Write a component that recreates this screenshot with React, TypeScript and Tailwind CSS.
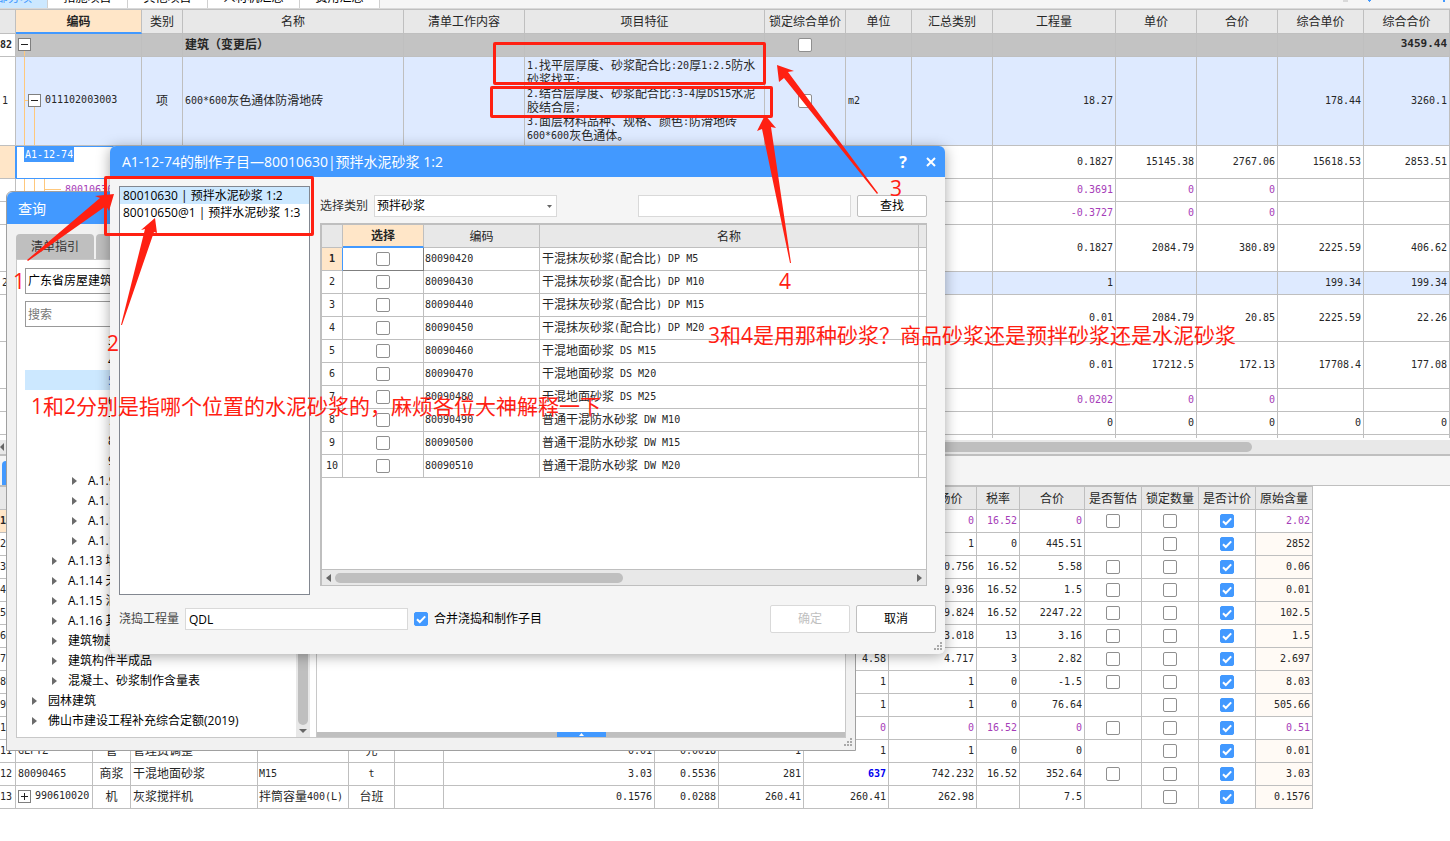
import type { ReactNode } from 'react';
import { clsx } from 'clsx';

const uiFont = "[font-family:'Open_Sans','Noto_Sans_CJK_SC',sans-serif]";

const billColumns = [
  { label: '', width: 'w-4' },
  { label: '编码', width: 'w-[126px]' },
  { label: '类别', width: 'w-[41px]' },
  { label: '名称', width: 'w-[221px]' },
  { label: '清单工作内容', width: 'w-[121px]' },
  { label: '项目特征', width: '' },
  { label: '锁定综合单价', width: 'w-[81px]' },
  { label: '单位', width: 'w-[66px]' },
  { label: '汇总类别', width: 'w-[81px]' },
  { label: '工程量', width: 'w-[123px]' },
  { label: '单价', width: 'w-[81px]' },
  { label: '合价', width: 'w-[81px]' },
  { label: '综合单价', width: 'w-[86px]' },
  { label: '综合合价', width: 'w-[86px]' },
];

const features = [
  '1.找平层厚度、砂浆配合比:20厚1:2.5防水',
  '砂浆找平;',
  '2.结合层厚度、砂浆配合比:3-4厚DS15水泥',
  '胶结合层;',
  '3.面层材料品种、规格、颜色:防滑地砖',
  '600*600灰色通体。',
];

// rows below the one being edited
const billRows: { height: string; no?: string; values: string[]; tone?: 'purple' | 'blue' }[] = [
  { height: 'h-[23px]', values: ['-0.3727', '0', '0', '', ''], tone: 'purple' },
  { height: 'h-[47px]', values: ['0.1827', '2084.79', '380.89', '2225.59', '406.62'] },
  { height: 'h-[23px]', no: '2', values: ['1', '', '', '199.34', '199.34'], tone: 'blue' },
  { height: 'h-[47px]', values: ['0.01', '2084.79', '20.85', '2225.59', '22.26'] },
  { height: 'h-[47px]', values: ['0.01', '17212.5', '172.13', '17708.4', '177.08'] },
  { height: 'h-[23px]', values: ['0.0202', '0', '0', '', ''], tone: 'purple' },
  { height: 'h-[23px]', values: ['0', '0', '0', '0', '0'] },
];

const resourceColumns = [
  { label: '', width: 'w-4' },
  { label: '', width: 'w-[77px]' },
  { label: '', width: 'w-[38px]' },
  { label: '', width: 'w-[127px]' },
  { label: '', width: 'w-[91px]' },
  { label: '', width: 'w-[46px]' },
  { label: '', width: 'w-[49px]' },
  { label: '', width: 'w-[211px]' },
  { label: '', width: 'w-[64px]' },
  { label: '', width: 'w-[85px]' },
  { label: '', width: 'w-[85px]' },
  { label: '含税市场价', width: 'w-[88px]' },
  { label: '税率', width: 'w-[43px]' },
  { label: '合价', width: 'w-[65px]' },
  { label: '是否暂估', width: 'w-[57px]' },
  { label: '锁定数量', width: 'w-[57px]' },
  { label: '是否计价', width: 'w-[57px]' },
  { label: '原始含量', width: 'w-[57px]' },
];

type Resource = {
  code?: string;
  kind?: string;
  name?: string;
  spec?: string;
  unit?: string;
  amounts?: string[];
  price?: string;
  taxPrice: string;
  rate: string;
  total: string;
  estimate: boolean;
  origin: string;
  purple?: boolean;
};

const resources: Resource[] = [
  { taxPrice: '0', rate: '16.52', total: '0', estimate: true, origin: '2.02', purple: true },
  { taxPrice: '1', rate: '0', total: '445.51', estimate: false, origin: '2852' },
  { taxPrice: '0.756', rate: '16.52', total: '5.58', estimate: true, origin: '0.06' },
  { taxPrice: '9.936', rate: '16.52', total: '1.5', estimate: true, origin: '0.01' },
  { taxPrice: '9.824', rate: '16.52', total: '2247.22', estimate: true, origin: '102.5' },
  { taxPrice: '3.018', rate: '13', total: '3.16', estimate: true, origin: '1.5' },
  { price: '4.58', taxPrice: '4.717', rate: '3', total: '2.82', estimate: true, origin: '2.697' },
  { price: '1', taxPrice: '1', rate: '0', total: '-1.5', estimate: true, origin: '8.03' },
  { price: '1', taxPrice: '1', rate: '0', total: '76.64', estimate: false, origin: '505.66' },
  { price: '0', taxPrice: '0', rate: '16.52', total: '0', estimate: true, origin: '0.51', purple: true },
  {
    code: 'GLFTZ', kind: '管', name: '管理费调整', unit: '元', amounts: ['0.01', '0.0018', '1'],
    price: '1', taxPrice: '1', rate: '0', total: '0', estimate: false, origin: '0.01',
  },
  {
    code: '80090465', kind: '商浆', name: '干混地面砂浆', spec: 'M15', unit: 't', amounts: ['3.03', '0.5536', '281'],
    price: '637', taxPrice: '742.232', rate: '16.52', total: '352.64', estimate: true, origin: '3.03',
  },
  {
    code: '990610020', kind: '机', name: '灰浆搅拌机', spec: '拌筒容量400(L)', unit: '台班', amounts: ['0.1576', '0.0288', '260.41'],
    price: '260.41', taxPrice: '262.98', rate: '', total: '7.5', estimate: false, origin: '0.1576',
  },
];

const mortars = [
  ['80090420', '干混抹灰砂浆(配合比) DP M5'],
  ['80090430', '干混抹灰砂浆(配合比) DP M10'],
  ['80090440', '干混抹灰砂浆(配合比) DP M15'],
  ['80090450', '干混抹灰砂浆(配合比) DP M20'],
  ['80090460', '干混地面砂浆 DS M15'],
  ['80090470', '干混地面砂浆 DS M20'],
  ['80090480', '干混地面砂浆 DS M25'],
  ['80090490', '普通干混防水砂浆 DW M10'],
  ['80090500', '普通干混防水砂浆 DW M15'],
  ['80090510', '普通干混防水砂浆 DW M20'],
];

const indents = ['pl-[7px]', 'pl-[27px]', 'pl-[47px]', 'pl-[83px]'];

const tree: { level: number; label: string }[] = [
  { level: 3, label: '3' },
  { level: 3, label: '4' },
  { level: 3, label: '5' },
  { level: 3, label: '6' },
  { level: 3, label: '7' },
  { level: 3, label: '8' },
  { level: 3, label: '9' },
  { level: 2, label: 'A.1.9' },
  { level: 2, label: 'A.1.10' },
  { level: 2, label: 'A.1.11' },
  { level: 2, label: 'A.1.12' },
  { level: 1, label: 'A.1.13 墙面' },
  { level: 1, label: 'A.1.14 天棚' },
  { level: 1, label: 'A.1.15 油漆' },
  { level: 1, label: 'A.1.16 其他' },
  { level: 1, label: '建筑物超高' },
  { level: 1, label: '建筑构件半成品' },
  { level: 1, label: '混凝土、砂浆制作含量表' },
  { level: 0, label: '园林建筑' },
  { level: 0, label: '佛山市建设工程补充综合定额(2019)' },
];

// Half-width characters are set in a mono face, two of them to one full-width one
function Mixed({ text }: { text: string }) {
  return (
    <>
      {text.split(/([ -~]+)/).filter(Boolean).map((part, i) =>
        /^[ -~]/.test(part) ? (
          <span key={i} className="align-[1px] text-[10px] leading-none whitespace-pre [font-family:'DejaVu_Sans_Mono',monospace]">{part}</span>
        ) : (
          part
        ),
      )}
    </>
  );
}

function Check({ label, checked = false }: { label: string; checked?: boolean }) {
  return (
    <span className="inline-grid size-[14px] align-middle">
      <input
        type="checkbox"
        aria-label={label}
        defaultChecked={checked}
        className="peer col-start-1 row-start-1 size-[14px] appearance-none rounded-xs border border-[#8f8f8f] bg-white checked:border-[#4299ff] checked:bg-[#4299ff]"
      />
      <svg viewBox="0 0 14 14" className="pointer-events-none col-start-1 row-start-1 hidden size-[14px] peer-checked:block">
        <path d="M3 7.2 L5.8 10 L11.2 4.4" fill="none" stroke="#fff" strokeWidth="2" />
      </svg>
    </span>
  );
}

function Expander({ open }: { open: boolean }) {
  return (
    <button aria-label={open ? '折叠' : '展开'} className="relative block size-[13px] shrink-0 border border-[#7f7f7f] bg-white">
      <svg viewBox="0 0 11 11" className="size-[11px]">
        <path d={open ? 'M2 5.5H9' : 'M2 5.5H9M5.5 2V9'} stroke="#222" strokeWidth="1" />
      </svg>
    </button>
  );
}

function Grip({ className }: { className: string }) {
  return (
    <svg viewBox="0 0 8 8" className={clsx('absolute size-2', className)} fill="#a9a9a9">
      <path d="M6 0h2v2h-2zM3 3h2v2h-2zM6 3h2v2h-2zM0 6h2v2h-2zM3 6h2v2h-2zM6 6h2v2h-2z" />
    </svg>
  );
}

function Cell({ children, className }: { children?: ReactNode; className?: string }) {
  return <td className={clsx('overflow-hidden border-r border-b border-[#bfbfbf] pb-0.5 whitespace-nowrap', className)}>{children}</td>;
}

function Head({ label, active }: { label: string; active?: boolean }) {
  return (
    <th
      className={clsx(
        'overflow-hidden border-r border-b pb-px whitespace-nowrap',
        active ? 'border-r-[#bfbfbf] border-b-2 border-b-[#4299ff] bg-[#ffe6c8] font-bold' : 'border-[#bfbfbf] bg-[#e8e8e8] font-normal',
      )}
    >
      {label}
    </th>
  );
}

function BillTable() {
  return (
    <table className="w-full table-fixed border-separate border-spacing-0 border-t border-[#bfbfbf] text-xs leading-[14px] text-[#262626]">
      <colgroup>
        {billColumns.map((c, i) => <col key={i} className={c.width} />)}
      </colgroup>
      <thead>
        <tr className="h-6">
          {billColumns.map((c, i) => <Head key={i} label={c.label} active={c.label === '编码'} />)}
        </tr>
      </thead>
      <tbody>
        <tr className="bg-[#c3c3c3] font-bold">
          <Cell className="h-[23px] bg-white"><Mixed text="82" /></Cell>
          <Cell className="relative pl-0.5">
            <svg className="absolute top-0 left-0 h-[23px] w-5" stroke="#ffc87c"><path d="M8.5 17V23" /></svg>
            <Expander open />
          </Cell>
          <Cell />
          <Cell className="pl-0.5">建筑（变更后）</Cell>
          <Cell />
          <Cell />
          <Cell className="text-center"><Check label="锁定综合单价" /></Cell>
          <Cell />
          <Cell />
          <Cell />
          <Cell />
          <Cell />
          <Cell />
          <Cell className="pr-0.5 text-right text-[11px] [font-family:'DejaVu_Sans_Mono',monospace]">3459.44</Cell>
        </tr>
        <tr className="bg-[#deeaff]">
          <Cell className="h-[89px] bg-white pl-0.5"><Mixed text="1" /></Cell>
          <Cell className="relative pl-3">
            <svg className="absolute top-0 left-0 h-[89px] w-6" stroke="#ffc87c" fill="none"><path d="M8.5 0V89M8.5 43.5H12M18.5 50V89" /></svg>
            <div className="flex items-center gap-1">
              <Expander open />
              <Mixed text="011102003003" />
            </div>
          </Cell>
          <Cell className="text-center">项</Cell>
          <Cell className="pl-0.5"><Mixed text="600*600灰色通体防滑地砖" /></Cell>
          <Cell />
          <Cell className="pl-0.5">
            {features.map((line) => <div key={line}><Mixed text={line} /></div>)}
          </Cell>
          <Cell className="text-center"><Check label="锁定综合单价" /></Cell>
          <Cell className="pl-0.5"><Mixed text="m2" /></Cell>
          <Cell />
          {['18.27', '', '', '178.44', '3260.1'].map((v, i) => (
            <Cell key={i} className="pr-0.5 text-right"><Mixed text={v} /></Cell>
          ))}
        </tr>
        <tr>
          <Cell className="h-[33px] border-r-[#4299ff] bg-[#ffe6c8]" />
          <Cell className="border-t border-l border-t-[#4299ff] border-b-[#4299ff] border-l-[#4299ff] pl-[7px] align-top">
            <input
              aria-label="编码"
              defaultValue="A1-12-74"
              className="block h-[15px] w-[50px] bg-[#4299ff] px-px text-[10px] text-white outline-none [font-family:'DejaVu_Sans_Mono',monospace]"
            />
          </Cell>
          {Array.from({ length: 7 }, (_, i) => <Cell key={i} />)}
          {['0.1827', '15145.38', '2767.06', '15618.53', '2853.51'].map((v, i) => (
            <Cell key={i} className="pr-0.5 text-right"><Mixed text={v} /></Cell>
          ))}
        </tr>
        <tr className="text-[#a63db8]">
          <Cell className="h-[23px]" />
          <Cell className="relative pl-[49px]">
            <svg className="absolute top-0 left-0 h-[23px] w-12" stroke="#ffc87c" fill="none"><path d="M8.5 0V23M18.5 0V23M28.5 0V23M28.5 10.5H45" /></svg>
            <Mixed text="80010630" />
          </Cell>
          {Array.from({ length: 7 }, (_, i) => <Cell key={i} />)}
          {['0.3691', '0', '0', '', ''].map((v, i) => (
            <Cell key={i} className="pr-0.5 text-right"><Mixed text={v} /></Cell>
          ))}
        </tr>
        {billRows.map((row, r) => (
          <tr key={r} className={clsx(row.tone === 'purple' && 'text-[#a63db8]', row.tone === 'blue' && 'bg-[#deeaff]')}>
            <Cell className={clsx(row.height, 'bg-white pl-0.5')}><Mixed text={row.no ?? ''} /></Cell>
            {Array.from({ length: 8 }, (_, i) => <Cell key={i} />)}
            {row.values.map((v, i) => (
              <Cell key={i} className="pr-0.5 text-right"><Mixed text={v} /></Cell>
            ))}
          </tr>
        ))}
        {/* the next row only just shows above the scroll bar */}
        <tr className="h-[3px]">
          {billColumns.map((_, i) => <td key={i} className="border-r border-[#bfbfbf]" />)}
        </tr>
      </tbody>
    </table>
  );
}

function ResourceTable() {
  return (
    <table className="w-[1313px] table-fixed border-separate border-spacing-0 border-t border-[#bfbfbf] text-xs leading-[14px] text-[#262626]">
      <colgroup>
        {resourceColumns.map((c, i) => <col key={i} className={c.width} />)}
      </colgroup>
      <thead>
        <tr className="h-[23px]">
          {resourceColumns.map((c, i) => <Head key={i} label={c.label} />)}
        </tr>
      </thead>
      <tbody>
        {resources.map((r, n) => (
          <tr key={n} className={clsx(r.purple && 'text-[#a63db8]')}>
            <Cell className={clsx('h-[23px] text-[#262626]', n === 0 && 'bg-[#ffe6c8] font-bold')}><Mixed text={String(n + 1)} /></Cell>
            <Cell className="pl-0.5">
              {r.code === '990610020' ? (
                <div className="flex items-center gap-1"><Expander open={false} /><Mixed text={r.code} /></div>
              ) : (
                <Mixed text={r.code ?? ''} />
              )}
            </Cell>
            <Cell className="text-center">{r.kind}</Cell>
            <Cell className="pl-0.5">{r.name}</Cell>
            <Cell className="pl-px"><Mixed text={r.spec ?? ''} /></Cell>
            <Cell className="text-center"><Mixed text={r.unit ?? ''} /></Cell>
            <Cell />
            {[0, 1, 2].map((i) => (
              <Cell key={i} className="pr-0.5 text-right"><Mixed text={r.amounts?.[i] ?? ''} /></Cell>
            ))}
            <Cell className={clsx('pr-0.5 text-right', r.price === '637' && 'font-bold text-[#0000f0]')}><Mixed text={r.price ?? ''} /></Cell>
            <Cell className="pr-0.5 text-right"><Mixed text={r.taxPrice} /></Cell>
            <Cell className="pr-0.5 text-right"><Mixed text={r.rate} /></Cell>
            <Cell className="pr-0.5 text-right"><Mixed text={r.total} /></Cell>
            <Cell className="text-center">{r.estimate && <Check label="是否暂估" />}</Cell>
            <Cell className="text-center"><Check label="锁定数量" /></Cell>
            <Cell className="text-center"><Check label="是否计价" checked /></Cell>
            <Cell className={clsx('pr-0.5 text-right', !r.purple && 'bg-[#fffaf5]')}><Mixed text={r.origin} /></Cell>
          </tr>
        ))}
      </tbody>
    </table>
  );
}

function QueryWindow() {
  return (
    <section className={clsx('absolute top-[191px] left-1.5 flex h-[560px] w-[850px] flex-col rounded-t-md border border-[#a0a0a0] bg-[#f1f1f1] text-xs text-black', uiFont)}>
      <header className="h-8 shrink-0 rounded-t-md bg-[#4299ff] pl-[11px] text-sm leading-[34px] text-white">查询</header>
      <div className="flex min-h-0 grow flex-col px-[9px] pt-2.5 pb-3">
        <div className="flex gap-0.5">
          <button className="h-[25px] w-[78px] rounded-t-sm bg-[#bfbfbf] text-[#333]">清单指引</button>
          <button aria-label="清单" className="h-[25px] w-[78px] rounded-t-sm bg-[#bfbfbf]" />
        </div>
        <div className="flex min-h-0 grow border border-[#c8c8c8] bg-white">
          <div className="flex w-[293px] shrink-0">
            <div className="min-w-0 grow pt-2 pl-2">
              <select aria-label="定额库" className="block h-[26px] w-full appearance-none border border-[#999] bg-white px-0.5">
                <option>广东省房屋建筑</option>
              </select>
              <input aria-label="搜索" placeholder="搜索" className="mt-[7px] block h-[26px] w-full border border-[#999] px-0.5 outline-none placeholder:text-[#777]" />
              <ul className="mt-[3px]">
                {tree.map((node) => (
                  <li
                    key={node.label}
                    className={clsx('flex h-5 items-center gap-[11px] pt-0.5 whitespace-nowrap', indents[node.level], node.label === '5' && 'bg-[#cce8ff] text-[#1a73d9]')}
                  >
                    {node.level < 3 && (
                      <svg viewBox="0 0 5 8" className="h-2 w-[5px] shrink-0" fill="#6b6b6b"><path d="M0 0L5 4L0 8Z" /></svg>
                    )}
                    {node.label}
                  </li>
                ))}
              </ul>
            </div>
            <div className="flex w-[14px] flex-col items-center bg-[#e8e8e8]">
              <div className="w-2.5 grow rounded-full bg-[#bfbfbf]" />
              <svg viewBox="0 0 8 4" className="my-1 h-1 w-2" fill="#666"><path d="M0 0H8L4 4Z" /></svg>
            </div>
          </div>
          <div className="ml-1.5 flex grow flex-col justify-end border-l border-[#c8c8c8]">
            <div className="flex h-[5px] justify-center bg-[#bfbfbf]">
              <button aria-label="展开" className="flex w-[49px] justify-center bg-[#4299ff] pt-px">
                <svg viewBox="0 0 5 3" className="h-[3px] w-[5px]" fill="#fff"><path d="M0 3L2.5 0L5 3Z" /></svg>
              </button>
            </div>
          </div>
        </div>
      </div>
      <Grip className="right-[3px] bottom-1" />
    </section>
  );
}

function MortarTable() {
  return (
    <table className="w-full table-fixed border-separate border-spacing-0 text-xs leading-[14px] text-[#262626] [font-family:'Noto_Sans_CJK_SC',sans-serif]">
      <colgroup>
        <col className="w-[21px]" />
        <col className="w-[81px]" />
        <col className="w-[116px]" />
        <col />
        <col className="w-[7px]" />
      </colgroup>
      <thead>
        <tr className="h-[23px]">
          <Head label="" />
          <Head label="选择" active />
          <Head label="编码" />
          <Head label="名称" />
          <th className="border-b border-[#bfbfbf] bg-[#e8e8e8]" />
        </tr>
      </thead>
      <tbody>
        {mortars.map(([code, name], i) => (
          <tr key={code}>
            <Cell className={clsx('h-[23px] text-center', i === 0 && 'border-r-[#4299ff] bg-[#ffe6c8] font-bold')}><Mixed text={String(i + 1)} /></Cell>
            <Cell className={clsx('text-center', i === 0 && 'border-r-[#7f7f7f] border-b-[#7f7f7f]')}><Check label={code} /></Cell>
            <Cell className="pl-px"><Mixed text={code} /></Cell>
            <Cell className="pl-0.5"><Mixed text={name} /></Cell>
            <td className="border-b border-[#bfbfbf]" />
          </tr>
        ))}
      </tbody>
    </table>
  );
}

function MakeItemDialog() {
  return (
    <section className={clsx('absolute top-[146px] left-[110px] flex h-[508px] w-[835px] flex-col rounded-md bg-[#f5f5f5] text-xs text-black shadow-[0_2px_14px_rgba(0,0,0,0.35)]', uiFont)}>
      <header className="flex h-[31px] shrink-0 items-center rounded-t-md bg-[#4299ff] pr-2 pl-3 text-white">
        <h2 className="grow text-sm leading-8">A1-12-74的制作子目—80010630|预拌水泥砂浆 1:2</h2>
        <button aria-label="帮助" className="mr-4 w-3 text-base leading-5 font-bold">?</button>
        <button aria-label="关闭" className="grid size-3 place-items-center">
          <svg viewBox="0 0 10 10" className="size-2.5" stroke="#fff" strokeWidth="2"><path d="M1 1L9 9M9 1L1 9" /></svg>
        </button>
      </header>
      <div className="flex gap-2.5 pt-[9px] pr-[18px] pl-[9px]">
        <ul className="h-[409px] w-[191px] shrink-0 border border-[#828790] bg-white whitespace-nowrap">
          <li className="h-[17px] bg-[#cce8ff] pl-[3px] leading-[17px]">80010630 | 预拌水泥砂浆 1:2</li>
          <li className="h-[17px] pl-[3px] leading-[17px]">80010650@1 | 预拌水泥砂浆 1:3</li>
        </ul>
        <div className="flex min-w-0 grow flex-col pt-[9px]">
          <div className="flex h-[22px] items-center">
            <label htmlFor="kind" className="w-[54px] text-[#333]">选择类别</label>
            <div className="relative w-[183px]">
              <select id="kind" className="h-[22px] w-full appearance-none border border-[#d9d9d9] bg-white px-0.5">
                <option>预拌砂浆</option>
              </select>
              <svg viewBox="0 0 5 3" className="pointer-events-none absolute top-2.5 right-[5px] h-[3px] w-[5px]" fill="#666"><path d="M0 0H5L2.5 3Z" /></svg>
            </div>
            <input aria-label="查找内容" className="mr-1.5 ml-auto h-[22px] w-[213px] border border-[#d9d9d9] bg-white outline-none" />
            <button className="h-[22px] w-[70px] rounded-xs border border-[#bfbfbf] bg-white">查找</button>
          </div>
          <div className="mt-1.5 flex h-[363px] flex-col border border-t-2 border-l-2 border-[#bfbfbf] bg-white">
            <MortarTable />
            <div className="mt-auto flex h-4 items-center border-t border-[#bfbfbf] bg-[#e8e8e8] px-1">
              <svg viewBox="0 0 5 8" className="h-2 w-[5px]" fill="#666"><path d="M5 0L0 4L5 8Z" /></svg>
              <div className="ml-1 h-2.5 w-[288px] rounded-full bg-[#bfbfbf]" />
              <svg viewBox="0 0 5 8" className="ml-auto h-2 w-[5px]" fill="#666"><path d="M0 0L5 4L0 8Z" /></svg>
            </div>
          </div>
        </div>
      </div>
      <footer className="flex items-center pt-2.5 pr-[9px] pl-[9px]">
        <label htmlFor="amount" className="w-[66px] text-[#444]">浇捣工程量</label>
        <input id="amount" defaultValue="QDL" className="h-[22px] w-[223px] border border-[#d9d9d9] bg-white px-[3px] outline-none" />
        <label className="ml-1.5 flex items-center gap-1.5">
          <Check label="合并浇捣和制作子目" checked />
          合并浇捣和制作子目
        </label>
        <button disabled className="ml-auto h-7 w-20 rounded-xs border border-[#d9d9d9] bg-white text-[#bfbfbf]">确定</button>
        <button className="ml-1.5 h-7 w-20 rounded-xs border border-[#bfbfbf] bg-white">取消</button>
      </footer>
      <Grip className="right-[3px] bottom-1" />
    </section>
  );
}

function Annotations() {
  return (
    <div className={clsx('pointer-events-none absolute inset-0 overflow-hidden text-[21px] leading-7 whitespace-nowrap text-[#ff2012]', uiFont)}>
      <div className="absolute top-[42px] left-[493px] h-[43px] w-[273px] rounded-xs border-3 border-[#ff2012]" />
      <div className="absolute top-[86px] left-[490px] h-8 w-[283px] rounded-xs border-3 border-[#ff2012]" />
      <div className="absolute top-[176px] left-[104px] h-[60px] w-[210px] rounded-xs border-3 border-[#ff2012]" />
      <svg className="absolute top-0 left-0 h-[400px] w-[900px]" fill="#ff2012">
        <path d="M27 260L100 198L95 196L114 194L109 211L106 206L28 261Z" />
        <path d="M121 325L145 229L141 230L155 218L157 233L154 232L122 325Z" />
        <path d="M878 193L788 72L794 71L777 65L779 82L784 78L877 194Z" />
        <path d="M791 263L771 127L776 128L765 115L757 131L762 129L790 263Z" />
      </svg>
      <span className="absolute top-[267px] left-[13px]">1</span>
      <span className="absolute top-[329px] left-[107px]">2</span>
      <span className="absolute top-[174px] left-[890px]">3</span>
      <span className="absolute top-[267px] left-[779px]">4</span>
      <p className="absolute top-[321px] left-[708px]">3和4是用那种砂浆？商品砂浆还是预拌砂浆还是水泥砂浆</p>
      <p className="absolute top-[392px] left-[31px]">1和2分别是指哪个位置的水泥砂浆的，麻烦各位大神解释一下</p>
    </div>
  );
}

export default function App() {
  return (
    <main className="relative min-h-screen w-full overflow-hidden bg-white [font-family:'Noto_Sans_CJK_SC',sans-serif]">
      <nav className="flex h-[9px] items-end overflow-hidden border-b border-[#d9d9d9] bg-[#f5f5f5] text-xs leading-4">
        <button className="-ml-4 h-6 w-16 border-r border-[#d0d0d0] bg-[#cce8ff] pt-0.5 text-left text-[#4299ff]">分部分项</button>
        <button className="h-6 w-20 border-r border-[#d0d0d0] bg-white pt-0.5">措施项目</button>
        <button className="h-6 w-20 border-r border-[#d0d0d0] bg-white pt-0.5">其他项目</button>
        <button className="h-6 w-[92px] border-r border-[#d0d0d0] bg-white pt-0.5">人材机汇总</button>
        <button className="h-6 w-20 border-r border-[#d0d0d0] bg-white pt-0.5">费用汇总</button>
        <svg className="ml-auto h-2 w-[108px]"><path d="M1 0H6V2H1Z" fill="#d9d9d9" /><path d="M26 0H29V1H28V2H27V1H26ZM101 0H103V2H101Z" fill="#4299ff" /></svg>
      </nav>
      <BillTable />
      <div className="mt-0.5 flex h-4 items-center border-b-2 border-[#bfbfbf] bg-[#e8e8e8]">
        <svg viewBox="0 0 4 8" className="h-2 w-1" fill="#666"><path d="M4 0L0 4L4 8Z" /></svg>
        <div className="mr-[198px] ml-1 h-2.5 grow rounded-full bg-[#bfbfbf]" />
      </div>
      <div className="flex h-[30px] items-end border-b border-[#bfbfbf] bg-[#f5f5f5] pl-0.5">
        <button aria-label="工料机显示" className="h-6 w-20 rounded-t-sm bg-[#4299ff]" />
      </div>
      <ResourceTable />
      <QueryWindow />
      <MakeItemDialog />
      <Annotations />
    </main>
  );
}
